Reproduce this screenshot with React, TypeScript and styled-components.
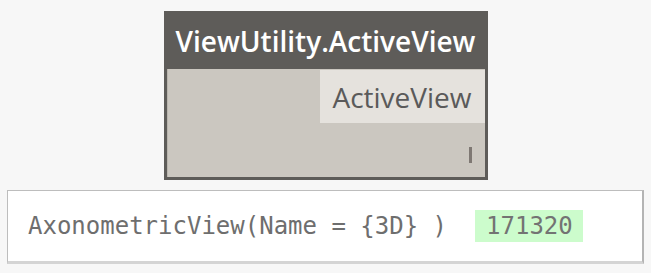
import React from "react";
import styled, { createGlobalStyle } from "styled-components";

const Global = createGlobalStyle`
  html, body { margin: 0; padding: 0; background: #f7f7f7; }
  body { font-family: "Open Sans", sans-serif; }
`;

const Page = styled.div`
  width: 651px;
  height: 273px;
  box-sizing: border-box;
  padding: 11px 7px 0 7px;
  display: flex;
  flex-direction: column;
  align-items: center;
`;

const Node = styled.div`
  width: 324px;
  box-sizing: border-box;
  background: #5e5c59;
  border: 3px solid #5e5c59;
  border-top: none;
  display: flex;
  flex-direction: column;
`;

const Header = styled.div`
  height: 58px;
  display: flex;
  align-items: center;
  justify-content: center;
  color: #ffffff;
  font-family: "Open Sans", sans-serif;
  font-weight: 600;
  font-size: 28px;
  letter-spacing: 0;
  padding-top: 1px;
  box-sizing: border-box;
`;

const Body = styled.div`
  height: 108px;
  background: #cbc7c0;
  border-left: 1px solid #b9b5ae;
  display: flex;
  flex-direction: column;
  align-items: flex-end;
  padding-top: 1px;
  box-sizing: border-box;
`;

const Port = styled.div`
  width: 165px;
  height: 53px;
  background: #e5e2dd;
  display: flex;
  align-items: center;
  justify-content: flex-end;
  padding-right: 13px;
  box-sizing: border-box;
  color: #5a5a5a;
  font-family: "Open Sans", sans-serif;
  font-size: 28px;
`;

const Lacing = styled.div`
  margin-top: auto;
  margin-right: 13px;
  margin-bottom: 14px;
  width: 3px;
  height: 16px;
  background: #7e7873;
`;

const Output = styled.div`
  align-self: stretch;
  margin-top: 10px;
  height: 74px;
  box-sizing: border-box;
  background: #ffffff;
  border: 1px solid #bdbdbd;
  border-right: 2px solid #b4b4b4;
  border-bottom: 3px solid #d4d4d4;
  display: flex;
  align-items: center;
  padding-left: 20px;
  padding-bottom: 1px;
  font-family: "DejaVu Sans Mono", "Liberation Mono", monospace;
  font-size: 24px;
  color: #6e6e6e;
  white-space: pre;
`;

const Value = styled.span`
  margin-left: 28px;
  padding: 0 10px 0 11px;
  height: 32px;
  line-height: 32px;
  background: #ccfccc;
  color: #737373;
`;

export default function App() {
  return (
    <>
      <Global />
      <Page>
        <Node>
          <Header>ViewUtility.ActiveView</Header>
          <Body>
            <Port>ActiveView</Port>
            <Lacing />
          </Body>
        </Node>
        <Output>
          AxonometricView(Name = {"{3D}"} )
          <Value>171320</Value>
        </Output>
      </Page>
    </>
  );
}
